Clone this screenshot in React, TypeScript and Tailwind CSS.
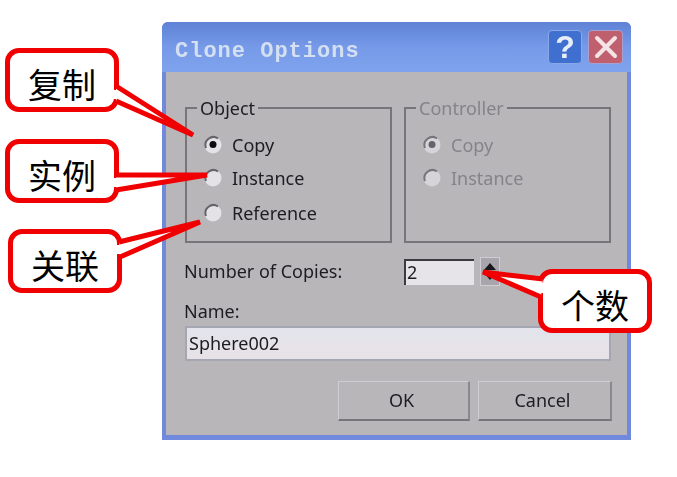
const cjk = { fontFamily: '"Noto Sans CJK SC", sans-serif' };

function Radio({ checked = false, disabled = false }: { checked?: boolean; disabled?: boolean }) {
  return (
    <svg width="20" height="20" viewBox="0 0 20 20" className="shrink-0">
      <circle cx="10" cy="10" r="8.5" fill={disabled ? "#d6d4d8" : "#e4e2e6"} />
      <path d="M3 13 A8 8 0 0 1 15 3.5" fill="none" stroke={disabled ? "#77757a" : "#66646a"} strokeWidth="2" />
      {checked && <circle cx="10" cy="9.5" r="3.5" fill={disabled ? "#66646a" : "#0c0c10"} />}
    </svg>
  );
}

function RadioRow({ label, checked, disabled, className }: { label: string; checked?: boolean; disabled?: boolean; className?: string }) {
  return (
    <div className={`flex h-6 items-center gap-[9px] ${className ?? ""}`}>
      <Radio checked={checked} disabled={disabled} />
      <span className={disabled ? "text-[#85838a]" : "text-[#1c1c22]"}>{label}</span>
    </div>
  );
}

function Group({ title, disabled, children }: { title: string; disabled?: boolean; children: React.ReactNode }) {
  return (
    <fieldset className="h-[147px] w-[207px] border-2 border-[#77757a] pl-[16px]">
      <legend className={`ml-[-6px] px-[3px] leading-6 ${disabled ? "text-[#85838a]" : "text-[#1c1c22]"}`}>{title}</legend>
      <div className="pt-[13px]">{children}</div>
    </fieldset>
  );
}

function Callout({ text, className }: { text: string; className: string }) {
  return (
    <div
      className={`absolute flex h-[64px] w-[114px] items-center justify-center rounded-[14px] border-[5px] border-[#f00000] bg-white pt-[7px] text-[34px] leading-none text-black ${className}`}
      style={cjk}
    >
      {text}
    </div>
  );
}

export default function App() {
  return (
    <div className="relative h-[477px] w-[677px] overflow-hidden bg-white pl-[162px] pt-[22px]">
      <div
        className="flex h-[418px] w-[469px] flex-col rounded-t-[6px] border-x-[4px] border-b-[5px] border-x-[#7189dc] border-b-[#7189dc] bg-[#b9b6ba] text-[18px] blur-[0.6px]"
        style={{ fontFamily: '"Noto Sans", sans-serif' }}
      >
        <div className="mx-[-4px] flex h-[50px] shrink-0 items-center justify-between rounded-t-[6px] bg-gradient-to-b from-[#5f82d6] via-[#769ae8] to-[#7fa3ec] pl-[13px] pr-[8px]">
          <span className="pt-[8px] font-['Liberation_Mono'] text-[22px] font-bold tracking-[1px] text-[#d4e0f2]">Clone Options</span>
          <div className="flex items-center gap-[6px]">
            <div className="flex h-[34px] w-[34px] items-center justify-center rounded-[4px] border border-[#8aa8e8] bg-[#3f70d0] font-['Liberation_Sans'] text-[32px] font-bold leading-none text-[#e8eef8]">?</div>
            <div className="flex h-[34px] w-[35px] items-center justify-center rounded-[4px] border border-[#a8a0d0] bg-[#c05f6e]">
              <svg width="28" height="28" viewBox="0 0 28 28">
                <path d="M5 5 L23 23 M23 5 L5 23" stroke="#f4e4e8" strokeWidth="4" strokeLinecap="round" />
              </svg>
            </div>
          </div>
        </div>

        <div className="flex flex-1 flex-col pl-[19px] pr-[16px] pt-[24px]">
          <div className="flex gap-[12px]">
            <Group title="Object">
              <RadioRow label="Copy" checked />
              <RadioRow label="Instance" className="mt-[9px]" />
              <RadioRow label="Reference" className="mt-[11px]" />
            </Group>
            <Group title="Controller" disabled>
              <RadioRow label="Copy" checked disabled />
              <RadioRow label="Instance" disabled className="mt-[9px]" />
            </Group>
          </div>

          <div className="mt-[14px] flex h-[29px] items-center text-[#1c1c22]">
            <span className="ml-[-1px] w-[220px]">Number of Copies:</span>
            <div className="flex h-[26px] w-[70px] items-center border-l-2 border-t-2 border-l-[#3a3a40] border-t-[#3a3a40] bg-[#e6e4e8] pl-[1px]">2</div>
            <div className="ml-[6px] flex h-[29px] w-[20px] flex-col items-center justify-center gap-[3px] border border-[#d0ced4] bg-[#a8a6ac]">
              <svg width="12" height="7" viewBox="0 0 12 7"><path d="M6 0 L12 7 L0 7 Z" fill="#18181c" /></svg>
              <svg width="12" height="7" viewBox="0 0 12 7"><path d="M0 0 L12 0 L6 7 Z" fill="#18181c" /></svg>
            </div>
          </div>

          <div className="ml-[-1px] mt-[13px] h-6 leading-6 text-[#1c1c22]">Name:</div>
          <div className="mt-[3px] flex h-[35px] w-[426px] items-center border-2 border-[#a4a6b4] bg-gradient-to-b from-[#e2e4ec] to-[#e8e2e6] pl-[2px] text-[#1c1c22]">Sphere002</div>

          <div className="mt-[20px] flex w-[427px] justify-end gap-[8px] text-[#1c1c22]">
            <div className="flex h-[40px] w-[132px] items-center justify-center border border-[#cfcdd2] border-b-[2px] border-r-[2px] border-b-[#77757a] border-r-[#8a888e] bg-[#b9b6ba] pr-[4px]">OK</div>
            <div className="flex h-[40px] w-[134px] items-center justify-center border border-[#cfcdd2] border-b-[2px] border-r-[2px] border-b-[#77757a] border-r-[#8a888e] bg-[#b9b6ba] pr-[4px]">Cancel</div>
          </div>
        </div>
      </div>

      <Callout text="复制" className="left-[5px] top-[48px]" />
      <Callout text="实例" className="left-[5px] top-[139px]" />
      <Callout text="关联" className="left-[8px] top-[229px]" />
      <Callout text="个数" className="left-[538px] top-[269px]" />

      <svg className="absolute left-0 top-0" width="677" height="477" viewBox="0 0 677 477">
        <g fill="#ffffff" stroke="#f00000" strokeWidth="5" strokeLinejoin="miter">
          <path d="M116 86 L193 135 L116 101" />
          <path d="M116 175 L207 175 L116 190" />
          <path d="M119 242 L200 222 L120 257" />
          <path d="M543 279 L483 272 L541 297" />
        </g>
        <g fill="#ffffff">
          <rect x="112" y="90" width="5" height="9" />
          <rect x="112" y="178" width="5" height="9" />
          <rect x="115" y="245" width="5" height="9" />
          <rect x="541" y="283" width="5" height="10" />
        </g>
      </svg>
    </div>
  );
}
